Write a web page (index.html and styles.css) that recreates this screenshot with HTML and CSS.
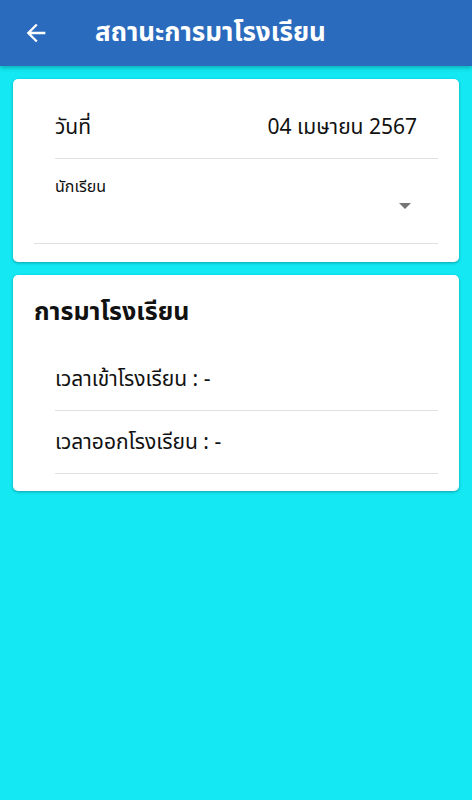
FILE: index.html
```html
<!DOCTYPE html>
<html lang="th">
<head>
    <meta charset="UTF-8">
    <meta name="viewport" content="width=device-width, initial-scale=1.0">
    <title>สถานะการมาโรงเรียน</title>
    <link rel="stylesheet" href="styles.css">
</head>
<body>
    <header class="app-bar">
        <button class="back-btn" aria-label="back">
            <svg width="24" height="24" viewBox="0 0 24 24"><path d="M20 11H7.83l5.59-5.59L12 4l-8 8 8 8 1.41-1.41L7.83 13H20v-2z" fill="#fff"/></svg>
        </button>
        <h1 class="app-title">สถานะการมาโรงเรียน</h1>
    </header>
    <main class="content">
        <div class="card">
            <div class="date-row">
                <span class="date-label">วันที่</span>
                <span class="date-value">04 เมษายน 2567</span>
            </div>
            <div class="select-field">
                <div class="select-label">นักเรียน</div>
                <div class="select-arrow"></div>
            </div>
        </div>
        <div class="card card-attend">
            <div class="card-title">การมาโรงเรียน</div>
            <div class="attend-row">เวลาเข้าโรงเรียน : -</div>
            <div class="attend-row">เวลาออกโรงเรียน : -</div>
        </div>
    </main>
</body>
</html>
```

FILE: styles.css
```css
body {
    margin: 0;
    font-family: "Noto Sans", "Noto Sans Thai", sans-serif;
    background-color: #13e8f3;
    color: #111;
    min-height: 100vh;
}
.app-bar {
    height: 66px;
    background-color: #2a6bbd;
    display: flex;
    align-items: center;
    box-shadow: 0 2px 4px rgba(0, 0, 0, 0.25);
}
.back-btn {
    background: none;
    border: none;
    padding: 0;
    margin-left: 22px;
    width: 28px;
    height: 28px;
    display: flex;
    align-items: center;
    justify-content: center;
}
.back-btn svg {
    width: 28px;
    height: 28px;
}
.app-title {
    margin: 0 0 0 45px;
    color: #fff;
    font-size: 26px;
    font-weight: bold;
}
.content {
    padding: 13px 13px;
    display: flex;
    flex-direction: column;
    gap: 13px;
}
.card {
    background-color: #fff;
    border-radius: 5px;
    box-shadow: 0 1px 3px rgba(0, 0, 0, 0.3);
    padding: 0 21px 18px 21px;
}
.date-row {
    margin-left: 21px;
    height: 80px;
    box-sizing: border-box;
    padding: 18px 21px 0 0;
    display: flex;
    align-items: center;
    justify-content: space-between;
    font-size: 21px;
    border-bottom: 1px solid #e0e0e0;
}
.select-field {
    height: 84px;
    border-bottom: 1px solid #e0e0e0;
    position: relative;
}
.select-label {
    padding: 16px 0 0 21px;
    font-size: 16px;
}
.select-arrow {
    position: absolute;
    right: 27px;
    top: 44px;
    width: 0;
    height: 0;
    border-left: 6px solid transparent;
    border-right: 6px solid transparent;
    border-top: 6px solid #757575;
}
.card-attend {
    padding-bottom: 17px;
}
.card-title {
    font-size: 25px;
    font-weight: bold;
    padding-top: 18px;
    height: 54px;
    box-sizing: border-box;
}
.attend-row {
    margin-left: 21px;
    height: 63px;
    display: flex;
    align-items: center;
    font-size: 21px;
    border-bottom: 1px solid #e0e0e0;
    box-sizing: border-box;
}
.card-title + .attend-row {
    height: 82px;
    padding-top: 19px;
}
```
